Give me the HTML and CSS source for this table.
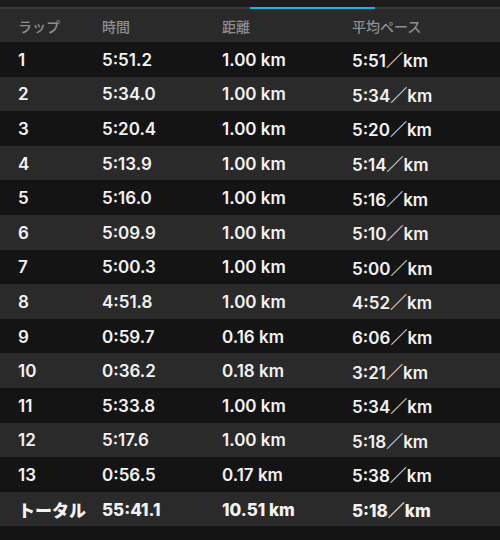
FILE: index.html
```html
<!DOCTYPE html>
<html lang="ja">
<head>
<meta charset="utf-8">
<link rel="stylesheet" href="styles.css">
</head>
<body>
<div class="page">
  <div class="topbar"></div>
  <div class="tabline"><div class="indicator"></div></div>
  <div class="row head">
    <span>ラップ</span><span>時間</span><span>距離</span><span>平均ペース</span>
  </div>
  <div class="row"><span>1</span><span>5:51.2</span><span>1.00 km</span><span>5:51／km</span></div>
  <div class="row"><span>2</span><span>5:34.0</span><span>1.00 km</span><span>5:34／km</span></div>
  <div class="row"><span>3</span><span>5:20.4</span><span>1.00 km</span><span>5:20／km</span></div>
  <div class="row"><span>4</span><span>5:13.9</span><span>1.00 km</span><span>5:14／km</span></div>
  <div class="row"><span>5</span><span>5:16.0</span><span>1.00 km</span><span>5:16／km</span></div>
  <div class="row"><span>6</span><span>5:09.9</span><span>1.00 km</span><span>5:10／km</span></div>
  <div class="row"><span>7</span><span>5:00.3</span><span>1.00 km</span><span>5:00／km</span></div>
  <div class="row"><span>8</span><span>4:51.8</span><span>1.00 km</span><span>4:52／km</span></div>
  <div class="row"><span>9</span><span>0:59.7</span><span>0.16 km</span><span>6:06／km</span></div>
  <div class="row"><span>10</span><span>0:36.2</span><span>0.18 km</span><span>3:21／km</span></div>
  <div class="row"><span>11</span><span>5:33.8</span><span>1.00 km</span><span>5:34／km</span></div>
  <div class="row"><span>12</span><span>5:17.6</span><span>1.00 km</span><span>5:18／km</span></div>
  <div class="row"><span>13</span><span>0:56.5</span><span>0.17 km</span><span>5:38／km</span></div>
  <div class="row total"><span>トータル</span><span>55:41.1</span><span>10.51 km</span><span>5:18／km</span></div>
</div>
</body>
</html>
```
FILE: styles.css
```css
html, body {
  margin: 0;
  padding: 0;
  background: #141414;
}
.page {
  width: 500px;
  height: 540px;
  overflow: hidden;
  background: #141414;
  font-family: Inter, "Noto Sans CJK JP", sans-serif;
}
.topbar {
  height: 7px;
  background: #1c1c1c;
}
.tabline {
  height: 2px;
  background: #3a3a3a;
  position: relative;
}
.indicator {
  position: absolute;
  left: 250px;
  top: 0;
  width: 125px;
  height: 2px;
  background: #19b2e6;
}
.row {
  display: grid;
  grid-template-columns: 84px 120px 130px 1fr;
  align-items: center;
  padding-left: 18px;
  padding-top: 1px;
  box-sizing: border-box;
  height: 34.6px;
  color: #f2f2f2;
  font-size: 17px;
  font-weight: 600;
  background: #141414;
}
.row:nth-child(odd) {
  background: #2a2a2a;
}
.row.head {
  height: 33px;
  padding-top: 0;
  background: #2a2a2a;
  color: #8e8e8e;
  font-size: 14px;
  font-weight: 500;
}
.row.total {
  font-weight: 800;
  background: #2a2a2a;
}
```
